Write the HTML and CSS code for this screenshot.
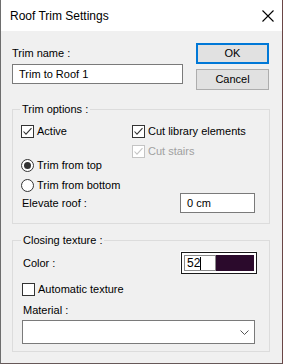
FILE: index.html
```html
<!DOCTYPE html>
<html lang="en">
<head>
    <meta charset="UTF-8">
    <meta name="viewport" content="width=device-width, initial-scale=1.0">
    <link rel="stylesheet" href="styles.css">
</head>
<body>

<div class="window">
    <div class="titlebar">
        <span class="title">Roof Trim Settings</span>
        <svg class="close" width="12" height="12" viewBox="0 0 12 12">
            <path d="M0.5 0.5 L11.5 11.5 M11.5 0.5 L0.5 11.5" stroke="#000" stroke-width="1.1" fill="none"/>
        </svg>
    </div>

    <div class="content">
        <div class="top-row">
            <div class="name-col">
                <div class="label">Trim name :</div>
                <div class="textbox name-box">Trim to Roof 1</div>
            </div>
            <div class="buttons">
                <div class="button default">OK</div>
                <div class="button">Cancel</div>
            </div>
        </div>

        <fieldset class="group options">
            <legend>Trim options :</legend>
            <div class="checks">
                <div class="check-col">
                    <div class="row">
                        <svg class="box" width="13" height="13" viewBox="0 0 13 13"><rect x="0.5" y="0.5" width="12" height="12" fill="#fff" stroke="#333"/><path d="M2.5 6.5 L5 9.2 L10.5 3.2" stroke="#333" stroke-width="1.1" fill="none"/></svg>
                        <span>Active</span>
                    </div>
                </div>
                <div class="check-col right">
                    <div class="row">
                        <svg class="box" width="13" height="13" viewBox="0 0 13 13"><rect x="0.5" y="0.5" width="12" height="12" fill="#fff" stroke="#333"/><path d="M2.5 6.5 L5 9.2 L10.5 3.2" stroke="#333" stroke-width="1.1" fill="none"/></svg>
                        <span>Cut library elements</span>
                    </div>
                    <div class="row disabled">
                        <svg class="box" width="13" height="13" viewBox="0 0 13 13"><rect x="0.5" y="0.5" width="12" height="12" fill="#fff" stroke="#c4c4c4"/><path d="M2.5 6.5 L5 9.2 L10.5 3.2" stroke="#c4c4c4" stroke-width="1.1" fill="none"/></svg>
                        <span>Cut stairs</span>
                    </div>
                </div>
            </div>
            <div class="row">
                <svg class="box" width="13" height="13" viewBox="0 0 13 13"><circle cx="6.5" cy="6.5" r="6" fill="#fff" stroke="#333"/><circle cx="6.5" cy="6.5" r="3.5" fill="#333"/></svg>
                <span>Trim from top</span>
            </div>
            <div class="row">
                <svg class="box" width="13" height="13" viewBox="0 0 13 13"><circle cx="6.5" cy="6.5" r="6" fill="#fff" stroke="#333"/></svg>
                <span>Trim from bottom</span>
            </div>
            <div class="field-row elevate">
                <span class="label">Elevate roof :</span>
                <div class="textbox small-box">0 cm</div>
            </div>
        </fieldset>

        <fieldset class="group texture">
            <legend>Closing texture :</legend>
            <div class="field-row color-row">
                <span class="label">Color :</span>
                <div class="color-field">
                    <div class="color-num">52<span class="caret"></span></div>
                    <div class="color-swatch"></div>
                </div>
            </div>
            <div class="row auto">
                <svg class="box" width="13" height="13" viewBox="0 0 13 13"><rect x="0.5" y="0.5" width="12" height="12" fill="#fff" stroke="#333"/></svg>
                <span>Automatic texture</span>
            </div>
            <div class="label material">Material :</div>
            <div class="select">
                <svg width="9" height="5" viewBox="0 0 9 5"><path d="M0.5 0.5 L4.5 4.5 L8.5 0.5" stroke="#555" fill="none"/></svg>
            </div>
        </fieldset>
    </div>
</div>

</body>
</html>
```

FILE: styles.css
```css
body {
    margin: 0;
    font-family: "Liberation Sans", Arial, sans-serif;
    font-size: 11px;
    color: #000;
    background-color: #f0f0f0;
}

.window {
    width: 283px;
    height: 364px;
    box-sizing: border-box;
    border-left: 1px solid #6e6e6e;
    border-right: 1px solid #6a4646;
    border-bottom: 1px solid #665858;
    background-color: #f0f0f0;
}

.titlebar {
    height: 31px;
    background-color: #fff;
    display: flex;
    align-items: center;
    padding: 0 8px 0 9px;
}

.title {
    font-size: 12px;
    flex: 1;
}

.content {
    padding: 12px 12px 0 11px;
}

.top-row {
    display: flex;
    justify-content: space-between;
}

.name-col .label {
    margin-top: 3px;
    height: 15px;
    line-height: 15px;
}

.textbox {
    background-color: #fff;
    border: 1px solid #7a7a7a;
    box-sizing: border-box;
    height: 20px;
    line-height: 18px;
    padding-left: 6px;
}

.name-box {
    width: 171px;
    margin-top: 3px;
}

.buttons {
    width: 73px;
    margin-right: 1px;
}

.button {
    height: 21px;
    box-sizing: border-box;
    border: 1px solid #adadad;
    background-color: #e1e1e1;
    text-align: center;
    line-height: 19px;
    margin-bottom: 5px;
}

.button.default {
    border: 2px solid #0078d7;
    line-height: 17px;
}

.group {
    margin: 0;
    border: 1px solid #dcdcdc;
    padding: 0 8px;
    min-width: 0;
}

.group legend {
    padding: 0 2px;
    margin-left: -1px;
    line-height: 15px;
}

.options {
    margin-top: 7px;
    padding-top: 7px;
    padding-bottom: 10px;
}

.checks {
    display: flex;
}

.check-col {
    width: 111px;
}

.check-col.right {
    flex: 1;
}

.row {
    display: flex;
    align-items: center;
    height: 14px;
    margin-bottom: 6px;
}

.check-col .row:last-child {
    margin-bottom: 0;
}

.row .box {
    flex: none;
    margin-right: 3px;
}

.row.disabled {
    color: #a0a0a0;
}

.field-row {
    display: flex;
    align-items: center;
}

.field-row .label {
    padding-left: 1px;
}

.elevate {
    margin-top: -5px;
}

.small-box {
    width: 75px;
    margin-left: auto;
    margin-right: 6px;
}

.texture {
    margin-top: 9px;
    padding-left: 9px;
    padding-top: 4px;
    padding-bottom: 7px;
}

.color-row {
    height: 22px;
}

.color-field {
    margin-left: auto;
    margin-right: 4px;
    width: 76px;
    height: 22px;
    box-sizing: border-box;
    border: 1px solid #1a1a1a;
    box-shadow: -1px -1px 0 #fff;
    background-color: #fff;
    padding: 2px;
    display: flex;
}

.color-num {
    width: 32px;
    box-sizing: border-box;
    border: 1px solid #8a8a8a;
    font-size: 12px;
    line-height: 14px;
    padding-left: 2px;
}

.caret {
    display: inline-block;
    width: 1px;
    height: 13px;
    background-color: #000;
    vertical-align: top;
    margin-top: 1px;
}

.color-swatch {
    flex: 1;
    background-color: #2b0a2c;
}

.auto {
    margin-top: 8px;
    margin-bottom: 0;
}

.material {
    margin-top: 7px;
    padding-left: 1px;
    line-height: 15px;
}

.select {
    margin-top: 2px;
    margin-right: 6px;
    height: 24px;
    box-sizing: border-box;
    border: 1px solid #7a7a7a;
    background-color: #fff;
    display: flex;
    align-items: center;
    justify-content: flex-end;
    padding-right: 5px;
}
```
